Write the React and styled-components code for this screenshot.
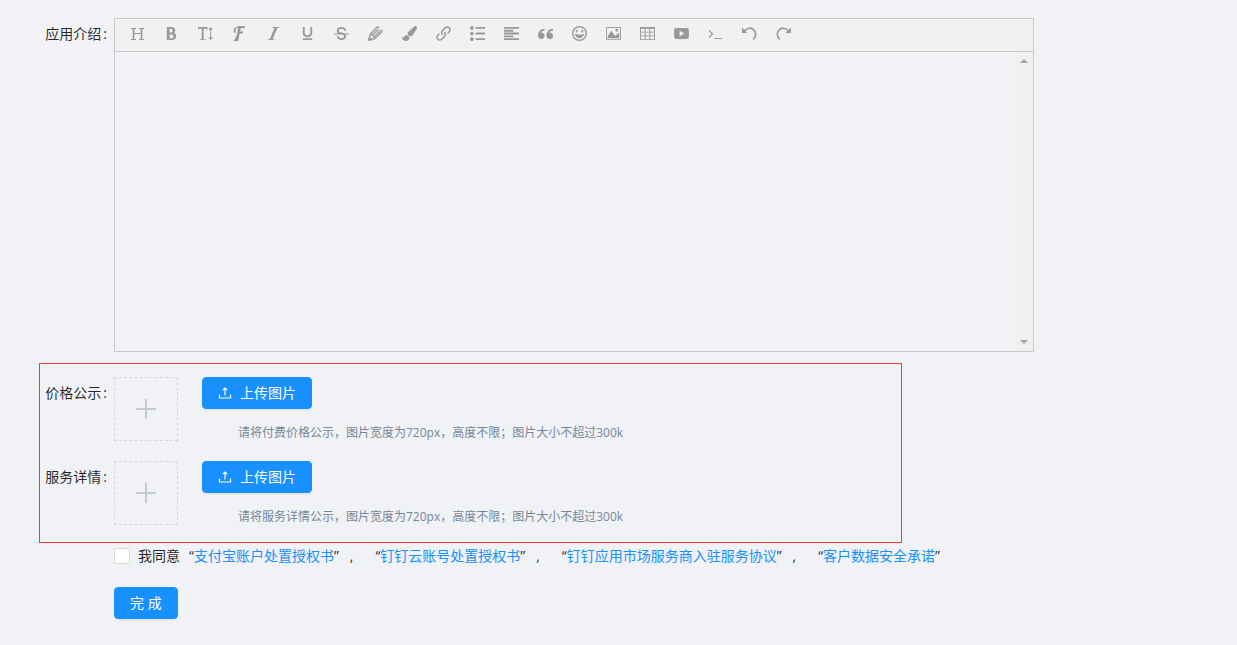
import { useState } from "react";
import styled, { createGlobalStyle } from "styled-components";
import {
  ImBold,
  ImFont,
  ImHappy,
  ImImage,
  ImItalic,
  ImLink,
  ImList2,
  ImParagraphLeft,
  ImPlay,
  ImQuotesLeft,
  ImStrikethrough,
  ImTable2,
  ImTextHeight,
  ImUnderline,
} from "react-icons/im";
import { FaPaintBrush } from "react-icons/fa";

const GlobalStyle = createGlobalStyle`
  * {
    box-sizing: border-box;
  }
  body {
    margin: 0;
    background: #f0f2f6;
    color: rgba(0, 0, 0, 0.85);
    font-family: "Open Sans", "Noto Sans CJK SC", sans-serif;
    font-size: 14px;
    line-height: 22px;
  }
  button, input, textarea {
    font: inherit;
  }
`;

const Form = styled.form`
  padding: 18px 39px 26px;
`;

const Row = styled.div`
  display: flex;
  max-width: ${(props) => props.$max || "none"};
`;

const Label = styled.label`
  flex: none;
  width: 75px;
  padding-right: 7px;
  line-height: 32px;
  text-align: right;

  &::after {
    content: ":";
    margin-left: 2px;
  }
`;

const Editor = styled.div`
  flex: 1;
  border: 1px solid #c9cbcf;
`;

const Toolbar = styled.div`
  display: flex;
  flex-wrap: wrap;
  padding: 0 5px;
  background: #f1f1f1;
  border-bottom: 1px solid #c9cbcf;
`;

const Tool = styled.button`
  display: flex;
  align-items: center;
  justify-content: center;
  width: 34px;
  height: 32px;
  padding: 0 0 3px 1px;
  border: none;
  background: none;
  color: #999;
  cursor: pointer;

  &:hover {
    color: #333;
  }
`;

const EditArea = styled.div`
  display: flex;
  height: 299px;
`;

const TextArea = styled.textarea`
  flex: 1;
  padding: 10px;
  border: none;
  outline: none;
  resize: none;
  background: transparent;
  scrollbar-width: none;
`;

const ScrollTrack = styled.div`
  display: flex;
  flex-direction: column;
  justify-content: space-between;
  align-items: center;
  width: 18px;
  padding: 7px 0;
  background: #f1f1f1;
`;

const Arrow = styled.span`
  border: 4px solid transparent;
  border-top-width: ${(props) => (props.$down ? "4px" : "0")};
  border-bottom-width: ${(props) => (props.$down ? "0" : "4px")};
  border-top-color: ${(props) => (props.$down ? "#a3a3a3" : "transparent")};
  border-bottom-color: ${(props) => (props.$down ? "transparent" : "#a3a3a3")};
`;

const UploadBox = styled.section`
  display: flex;
  flex-direction: column;
  gap: 20px;
  max-width: 863px;
  margin-top: 11px;
  padding: 13px 0 17px;
  border: 1px solid #f5393b;
`;

const UploadLabel = styled(Label)`
  width: 74px;
`;

const Thumb = styled.button`
  display: flex;
  align-items: center;
  justify-content: center;
  width: 64px;
  height: 64px;
  margin-right: 24px;
  padding: 0;
  border: 1px dashed #d4d6d9;
  background: none;
  color: #c5cace;
  cursor: pointer;
`;

const Button = styled.button`
  display: inline-flex;
  align-items: center;
  gap: 8px;
  height: 32px;
  padding: 0 15px;
  border: 1px solid #1890ff;
  border-radius: 4px;
  background: #1890ff;
  box-shadow: 0 2px 0 rgba(0, 0, 0, 0.04);
  color: #fff;
  cursor: pointer;
`;

const Hint = styled.p`
  margin: 16px 0 0 36px;
  color: #778797;
  font-size: 12px;
  line-height: 16px;
`;

const Agreement = styled.div`
  display: flex;
  flex-wrap: wrap;
  margin: 2px 0 20px 75px;
`;

const Check = styled.label`
  display: flex;
  align-items: center;
  gap: 8px;
  margin-right: 9px;
`;

const Checkbox = styled.input`
  appearance: none;
  width: 16px;
  height: 16px;
  margin: 0;
  border: 1px solid #d9d9d9;
  border-radius: 2px;
  background: #fff;

  &:checked {
    border-color: #1890ff;
    background: #1890ff;
  }
`;

const Doc = styled.span`
  margin-right: ${(props) => (props.$last ? "0" : "22px")};

  a {
    color: #1890ff;
    text-decoration: none;
  }
`;

const Comma = styled.span`
  margin-left: 11px;
`;

const Submit = styled.div`
  padding-left: 75px;
`;

const HeadingIcon = () => (
  <svg width="15" height="15" viewBox="0 0 15 15" fill="none" stroke="currentColor">
    <path d="M3.500 2v11M11.500 2v11" strokeWidth="1.6" />
    <path d="M1 2.500h5M9 2.500h5M1 13.500h5M9 13.500h5M3.500 7.500h8" />
  </svg>
);

const PencilIcon = () => (
  <svg width="15" height="15" viewBox="0 0 16 16" fill="none" stroke="currentColor" strokeWidth="1.4">
    <path d="M1 15l1.300-6L9 1.800c1-1 2.200-.9 2.800-.2M1 15l6-1.300 7.300-7c1-1.200.8-2.400 0-3M2.300 9c2.300.3 4.200 2 4.700 4.700M4.600 9.800l6.600-6.600M6.400 11.600L13.200 4.800" />
    <path d="M1 15l.6-2.800 2.200 2.200z" fill="currentColor" />
  </svg>
);

const TerminalIcon = () => (
  <svg width="15" height="15" viewBox="0 0 15 15" fill="none" stroke="currentColor" strokeWidth="1.2">
    <path d="M1 4.500L4.500 8 1 11.500M6.500 12.500H14" />
  </svg>
);

const UndoIcon = () => (
  <svg width="15" height="15" viewBox="0 0 15 15" fill="none" stroke="currentColor" strokeWidth="1.7">
    <path d="M2.500 4.800C5 1.800 9.500 1.200 12 4c2.500 2.800 2.200 6.800-.8 9.300" />
    <path d="M0 1.500V7h5.500z" fill="currentColor" stroke="none" />
  </svg>
);

const RedoIcon = () => (
  <svg width="15" height="15" viewBox="0 0 15 15" fill="none" stroke="currentColor" strokeWidth="1.7">
    <path d="M12.500 4.800C10 1.800 5.500 1.200 3 4 .5 6.800.8 10.800 3.800 13.300" />
    <path d="M15 1.500V7H9.500z" fill="currentColor" stroke="none" />
  </svg>
);

const UploadIcon = () => (
  <svg width="14" height="14" viewBox="0 0 14 14" fill="none" stroke="currentColor" strokeWidth="1.2">
    <path d="M1.500 8.500v3.500h11V8.500M7 9.500V2M4.800 4.200L7 2l2.200 2.200" />
  </svg>
);

const PlusIcon = () => (
  <svg width="20" height="20" viewBox="0 0 20 20" fill="none" stroke="currentColor" strokeWidth="2">
    <path d="M10 0v20M0 10h20" />
  </svg>
);

const tools = [
  ["标题", HeadingIcon],
  ["加粗", ImBold],
  ["字号", ImTextHeight],
  ["字体", ImFont],
  ["斜体", ImItalic],
  ["下划线", ImUnderline],
  ["删除线", ImStrikethrough],
  ["文字颜色", PencilIcon],
  ["背景颜色", FaPaintBrush],
  ["链接", ImLink],
  ["列表", ImList2],
  ["对齐", ImParagraphLeft],
  ["引用", ImQuotesLeft],
  ["表情", ImHappy],
  ["图片", ImImage],
  ["表格", ImTable2],
  ["视频", ImPlay],
  ["代码", TerminalIcon],
  ["撤销", UndoIcon],
  ["重做", RedoIcon],
];

const uploads = [
  {
    id: "price",
    label: "价格公示",
    hint: "请将付费价格公示，图片宽度为720px，高度不限；图片大小不超过300k",
  },
  {
    id: "service",
    label: "服务详情",
    hint: "请将服务详情公示，图片宽度为720px，高度不限；图片大小不超过300k",
  },
];

const docs = [
  "支付宝账户处置授权书",
  "钉钉云账号处置授权书",
  "钉钉应用市场服务商入驻服务协议",
  "客户数据安全承诺",
];

const App = () => {
  const [agree, setAgree] = useState(false);

  return (
    <>
      <GlobalStyle />
      <Form onSubmit={(e) => e.preventDefault()}>
        <Row $max="995px">
          <Label htmlFor="intro">应用介绍</Label>
          <Editor>
            <Toolbar>
              {tools.map(([name, Icon]) => (
                <Tool key={name} type="button" aria-label={name}>
                  <Icon size={15} />
                </Tool>
              ))}
            </Toolbar>
            <EditArea>
              <TextArea id="intro" />
              <ScrollTrack>
                <Arrow />
                <Arrow $down />
              </ScrollTrack>
            </EditArea>
          </Editor>
        </Row>

        <UploadBox>
          {uploads.map((item) => (
            <Row key={item.id}>
              <UploadLabel htmlFor={item.id}>{item.label}</UploadLabel>
              <Thumb type="button" aria-label="添加图片">
                <PlusIcon />
              </Thumb>
              <div>
                <Button type="button" id={item.id}>
                  <UploadIcon />
                  上传图片
                </Button>
                <Hint>{item.hint}</Hint>
              </div>
            </Row>
          ))}
        </UploadBox>

        <Agreement>
          <Check>
            <Checkbox
              type="checkbox"
              checked={agree}
              onChange={(e) => setAgree(e.target.checked)}
            />
            我同意
          </Check>
          {docs.map((doc, i) => (
            <Doc key={doc} $last={i === docs.length - 1}>
              “<a href="#doc">{doc}</a>”
              {i < docs.length - 1 && <Comma>,</Comma>}
            </Doc>
          ))}
        </Agreement>

        <Submit>
          <Button type="submit">完 成</Button>
        </Submit>
      </Form>
    </>
  );
};

export default App;
